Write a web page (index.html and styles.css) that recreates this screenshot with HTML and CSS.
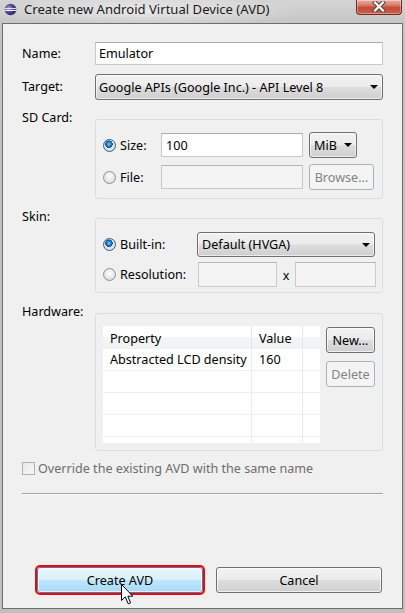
FILE: index.html
```html
<!DOCTYPE html>
<html>
<head>
<meta charset="utf-8">
<link rel="stylesheet" href="styles.css">
</head>
<body>
<div class="window">
  <div class="titlebar">
    <svg class="app-icon" width="13" height="13" viewBox="0 0 13 13">
      <defs>
        <radialGradient id="eg" cx="0.35" cy="0.4" r="0.7">
          <stop offset="0" stop-color="#a9a0dc"/>
          <stop offset="0.55" stop-color="#4b3f93"/>
          <stop offset="1" stop-color="#241c5a"/>
        </radialGradient>
        <clipPath id="ec"><circle cx="6.5" cy="6.5" r="5.8"/></clipPath>
      </defs>
      <circle cx="6.5" cy="6.5" r="5.8" fill="url(#eg)"/>
      <g clip-path="url(#ec)" fill="#ffffff">
        <rect x="0" y="5.2" width="13" height="0.9"/>
        <rect x="0" y="7" width="13" height="0.9"/>
      </g>
    </svg>
    <span class="title">Create new Android Virtual Device (AVD)</span>
    <div class="close">
      <svg width="14" height="11" viewBox="0 0 14 11">
        <path d="M3 1.5 L11 9.5 M11 1.5 L3 9.5" stroke="#4a4a4a" stroke-width="4.2" stroke-linecap="square" fill="none"/>
        <path d="M3 1.5 L11 9.5 M11 1.5 L3 9.5" stroke="#ffffff" stroke-width="2.2" stroke-linecap="square" fill="none"/>
      </svg>
    </div>
  </div>

  <div class="client">
    <div class="row row-name">
      <span class="lbl">Name:</span>
      <div class="field wide h23">Emulator</div>
    </div>

    <div class="row row-target">
      <span class="lbl">Target:</span>
      <div class="combo wide h26"><span class="combo-text">Google APIs (Google Inc.) - API Level 8</span><i class="arrow"></i></div>
    </div>

    <div class="row row-group">
      <span class="lbl top">SD Card:</span>
      <div class="group sd">
        <div class="grow">
          <div class="opt opt-sd"><span class="radio on"></span><span>Size:</span></div>
          <div class="field w142 h25">100</div>
          <div class="combo w48 h26 gap6"><span class="combo-text">MiB</span><i class="arrow"></i></div>
        </div>
        <div class="grow second">
          <div class="opt opt-sd"><span class="radio"></span><span>File:</span></div>
          <div class="field disabled w142 h25"></div>
          <div class="btn disabled w65 h26 gap6">Browse...</div>
        </div>
      </div>
    </div>

    <div class="row row-group">
      <span class="lbl top">Skin:</span>
      <div class="group skin">
        <div class="grow r25">
          <div class="opt opt-skin"><span class="radio on"></span><span>Built-in:</span></div>
          <div class="combo w178 h25"><span class="combo-text">Default (HVGA)</span><i class="arrow"></i></div>
        </div>
        <div class="grow r25 second5">
          <div class="opt opt-skin"><span class="radio"></span><span>Resolution:</span></div>
          <div class="field disabled w79 h25 ml1"></div>
          <span class="times">x</span>
          <div class="field disabled w81 h25"></div>
        </div>
      </div>
    </div>

    <div class="row row-group hw-row">
      <span class="lbl top">Hardware:</span>
      <div class="group hw">
        <div class="table">
          <div class="tr th">
            <div class="c1">Property</div><div class="c2">Value</div><div class="c3"></div>
          </div>
          <div class="tr">
            <div class="c1">Abstracted LCD density</div><div class="c2">160</div><div class="c3"></div>
          </div>
          <div class="tr"><div class="c1"></div><div class="c2"></div><div class="c3"></div></div>
          <div class="tr"><div class="c1"></div><div class="c2"></div><div class="c3"></div></div>
          <div class="tr"><div class="c1"></div><div class="c2"></div><div class="c3"></div></div>
          <div class="tr last"><div class="c1"></div><div class="c2"></div><div class="c3"></div></div>
        </div>
        <div class="hw-buttons">
          <div class="btn w49 h26">New...</div>
          <div class="btn disabled w49 h26">Delete</div>
        </div>
      </div>
    </div>

    <div class="check-row">
      <span class="checkbox"></span>
      <span class="check-text">Override the existing AVD with the same name</span>
    </div>

    <div class="separator"></div>

    <div class="button-bar">
      <div class="btn hot w166 h26">Create AVD</div>
      <div class="btn w166 h26">Cancel</div>
    </div>
  </div>

  <svg class="cursor" width="14" height="22" viewBox="0 0 14 22">
    <path d="M0.5 0.5 L0.5 16.5 L4.3 12.9 L7.2 19.8 L9.6 18.8 L6.8 12.2 L11.8 12.2 Z" fill="#ffffff" stroke="#000000" stroke-width="1" stroke-linejoin="miter"/>
  </svg>
</div>
</body>
</html>
```

FILE: styles.css
```css
html, body {
  margin: 0;
  padding: 0;
}
body {
  font-family: "Noto Sans", "Open Sans", sans-serif;
  font-size: 12.6px;
  color: #000;
  background: #c4c4c4;
}

.window {
  position: relative;
  width: 405px;
  height: 613px;
  box-sizing: border-box;
  display: flex;
  flex-direction: column;
  background: linear-gradient(#cfcfcf, #c2c2c2 40px, #c0c0c0);
  overflow: hidden;
}

.titlebar {
  height: 23px;
  flex: none;
  display: flex;
  align-items: flex-start;
  background:
    radial-gradient(ellipse 160px 16px at 145px 11px, rgba(255,255,255,0.55), rgba(255,255,255,0) 100%),
    linear-gradient(#d4d4d4, #c6c6c6);
}
.app-icon {
  margin: 3px 0 0 4px;
  flex: none;
}
.title {
  margin-left: 7px;
  line-height: 19px;
  font-size: 13.1px;
  color: #1a1a1a;
  white-space: nowrap;
}
.close {
  margin-left: auto;
  margin-right: 3px;
  width: 46px;
  height: 15px;
  box-sizing: border-box;
  border: 1px solid #6e2b22;
  border-top: none;
  border-radius: 0 0 4px 4px;
  background: linear-gradient(#eab0a4, #d9806f 35%, #c44a36 55%, #c85f46 100%);
  display: flex;
  align-items: center;
  justify-content: center;
  box-shadow: inset 0 0 0 1px rgba(255,255,255,0.35);
}
.close svg { display: block; margin-top: -1px; }

.client {
  flex: 1;
  margin: 0 2px 4px 2px;
  border: 1px solid #6d6d6d;
  background: #f0f0f0;
  padding: 18px 19px 15px 19px;
  display: flex;
  flex-direction: column;
  box-sizing: border-box;
}

.row {
  display: flex;
  align-items: center;
}
.row-target { margin-top: 9px; }
.row-group {
  margin-top: 9px;
  align-items: flex-start;
}
.lbl {
  width: 73px;
  flex: none;
  line-height: 16px;
  white-space: nowrap;
}
.lbl.top { margin-top: 1px; }

.wide { width: 288px; }
.w142 { width: 142px; }
.w48 { width: 48px; }
.w49 { width: 49px; }
.w65 { width: 65px; }
.w178 { width: 178px; }
.w79 { width: 79px; }
.w81 { width: 81px; }
.w166 { width: 166px; }
.h23 { height: 23px; }
.h25 { height: 25px; }
.h26 { height: 26px; }
.gap6 { margin-left: 6px; }
.ml1 { margin-left: 1px; }

.field {
  box-sizing: border-box;
  background: #fff;
  border: 1px solid #c5c8cf;
  border-top-color: #abadb3;
  padding: 0 3px;
  display: flex;
  align-items: center;
  white-space: nowrap;
  flex: none;
}
.field.w142 { padding-left: 4px; height: 24px; }
.field.disabled {
  background: #f4f4f4;
  border-color: #c9c9c9;
  border-top-color: #b6b6b6;
}

.combo {
  box-sizing: border-box;
  border: 1px solid #707070;
  border-radius: 3px;
  background: linear-gradient(#f2f2f2, #ebebeb 48%, #dddddd 52%, #cfcfcf);
  box-shadow: inset 0 0 0 1px rgba(255,255,255,0.6);
  display: flex;
  align-items: center;
  padding: 0 4px 0 3px;
  flex: none;
}
.combo-text {
  flex: 1;
  white-space: nowrap;
  overflow: hidden;
}
.combo.w48 .combo-text { padding-left: 1px; }
.combo.w178 .combo-text { padding-left: 1px; }
.arrow {
  flex: none;
  width: 0;
  height: 0;
  border-left: 4px solid transparent;
  border-right: 4px solid transparent;
  border-top: 4px solid #000;
}

.btn {
  box-sizing: border-box;
  border: 1px solid #707070;
  border-radius: 3px;
  background: linear-gradient(#f2f2f2, #ebebeb 48%, #dddddd 52%, #cfcfcf);
  box-shadow: inset 0 0 0 1px rgba(255,255,255,0.7);
  display: flex;
  align-items: center;
  justify-content: center;
  white-space: nowrap;
  flex: none;
}
.btn.disabled {
  background: #f4f4f4;
  border-color: #adb2b5;
  color: #838383;
  box-shadow: none;
}
.btn.hot {
  border-color: #3c7fb1;
  background: linear-gradient(#eaf6fd, #d9f0fc 48%, #bee6fd 52%, #a7d9f5);
  outline: 2px solid #ff0000;
  outline-offset: 0;
}

.group {
  width: 288px;
  box-sizing: border-box;
  border: 1px solid #d5dfe5;
  border-radius: 3px;
  margin-top: 10px;
  flex: none;
}
.group.sd { padding: 12px 8px 8px 7px; }
.group.skin { padding: 13px 7px 5px 7px; }
.group.hw {
  padding: 12px 7px 7px 7px;
  display: flex;
  align-items: flex-start;
}
.hw-row { margin-top: 10px; }

.grow {
  display: flex;
  align-items: center;
  height: 26px;
}
.grow.second { margin-top: 6px; }
.grow.r25 { height: 25px; }
.grow.second5 { margin-top: 5px; }

.opt {
  display: flex;
  align-items: center;
  flex: none;
  white-space: nowrap;
}
.opt-sd { width: 58px; }
.opt-skin { width: 94px; }

.radio {
  width: 13px;
  height: 13px;
  box-sizing: border-box;
  border-radius: 50%;
  border: 1px solid #8e8f8f;
  background: radial-gradient(circle at 50% 40%, #ffffff, #e4e4e4 60%, #d0d0d0);
  margin-right: 4px;
  flex: none;
}
.radio.on {
  border-color: #2c628b;
  background:
    radial-gradient(circle at 45% 38%, #9fe0ff 0, #2f8fd0 1.6px, #1a5d99 3.2px, #1c4f86 3.6px, transparent 3.9px),
    radial-gradient(circle at 50% 40%, #ffffff, #e4e4e4 60%, #cfd3d6);
}

.times {
  width: 18px;
  text-align: center;
  flex: none;
  padding-top: 1px;
}

.table {
  width: 217px;
  height: 117px;
  background: #fff;
  flex: none;
  overflow: hidden;
}
.tr {
  display: flex;
  height: 22px;
  box-sizing: border-box;
  border-bottom: 1px solid #efefef;
}
.tr.th {
  height: 23px;
  border-bottom: none;
  background: linear-gradient(#ffffff, #ffffff 45%, #f4f5f6 50%, #f1f2f4);
}
.tr.last { border-bottom: none; }
.tr > div {
  box-sizing: border-box;
  display: flex;
  align-items: center;
  white-space: nowrap;
  padding-left: 7px;
}
.c1 { width: 149px; border-right: 1px solid #e3ecf5; }
.c2 { width: 51px; border-right: 1px solid #e3ecf5; }
.c3 { width: 17px; }
.tr.th .c1, .tr.th .c2 { border-right: 1px solid #e5e5e5; }
.tr.th > div { padding-top: 1px; }

.hw-buttons {
  margin-left: 6px;
  margin-top: 1px;
  display: flex;
  flex-direction: column;
  gap: 8px;
}

.check-row {
  display: flex;
  align-items: center;
  margin-top: 11px;
  height: 13px;
}
.checkbox {
  width: 13px;
  height: 13px;
  box-sizing: border-box;
  border: 1px solid #b1b1b1;
  background: linear-gradient(135deg, #e8e8e8, #f8f8f8);
  margin-right: 3px;
  flex: none;
}
.check-text {
  color: #6d6d6d;
  white-space: nowrap;
  line-height: 16px;
}

.separator {
  margin-top: 18px;
  height: 0;
  border-top: 1px solid #a0a0a0;
  border-bottom: 1px solid #ffffff;
}

.button-bar {
  margin-top: auto;
  margin-left: 15px;
  display: flex;
  gap: 13px;
}

.cursor {
  position: absolute;
  left: 121px;
  top: 584px;
}
```
